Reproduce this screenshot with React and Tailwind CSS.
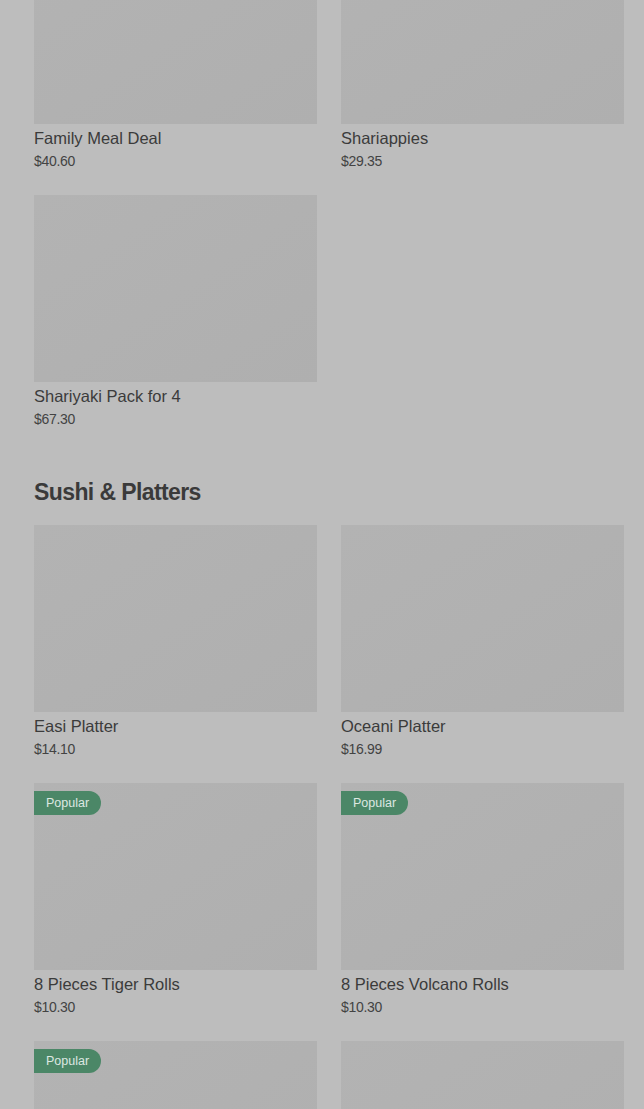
import React from 'react';

const sections = [
    {
        title: null,
        items: [
            { name: 'Family Meal Deal', price: '$40.60' },
            { name: 'Shariappies', price: '$29.35' },
            { name: 'Shariyaki Pack for 4', price: '$67.30' },
        ],
    },
    {
        title: 'Sushi & Platters',
        items: [
            { name: 'Easi Platter', price: '$14.10' },
            { name: 'Oceani Platter', price: '$16.99' },
            { name: '8 Pieces Tiger Rolls', price: '$10.30', popular: true },
            { name: '8 Pieces Volcano Rolls', price: '$10.30', popular: true },
            { name: 'Salmon Rolls', price: '$10.30', popular: true },
            { name: 'Crab Rolls', price: '$10.30' },
        ],
    },
];

function ItemCard({ item }) {
    return (
        <div className="flex flex-col">
            <div className="relative h-[187px] w-full bg-gradient-to-br from-[#b3b3b3] to-[#afafaf]">
                {item.popular && (
                    <span className="absolute left-0 top-[8px] h-[24px] px-[12px] flex items-center rounded-r-full bg-[#4b8767] text-[#dde8e2] text-[12.5px]">
                        Popular
                    </span>
                )}
            </div>
            <div className="pt-[3px] text-[16.5px] leading-[23px] text-[#3b3b3b]">{item.name}</div>
            <div className="text-[14px] leading-[22px] text-[#434343] tracking-[-0.3px]">{item.price}</div>
        </div>
    );
}

export default function App() {
    return (
        <div className="min-h-screen pb-[40px] bg-[#bdbdbd] font-['Liberation_Sans',sans-serif]">
            <div className="mt-[-63px] pl-[34px] pr-[20px]">
                {sections.map((section, i) => (
                    <div key={i} className={section.title ? 'mt-[47px]' : ''}>
                        {section.title && (
                            <h2 className="text-[23px] leading-[30px] font-bold text-[#3a3a3a] tracking-[-0.6px] mb-[18px]">
                                {section.title}
                            </h2>
                        )}
                        <div className="grid grid-cols-2 gap-x-[24px] gap-y-[23px]">
                            {section.items.map((item) => (
                                <ItemCard key={item.name} item={item} />
                            ))}
                        </div>
                    </div>
                ))}
            </div>
        </div>
    );
}
